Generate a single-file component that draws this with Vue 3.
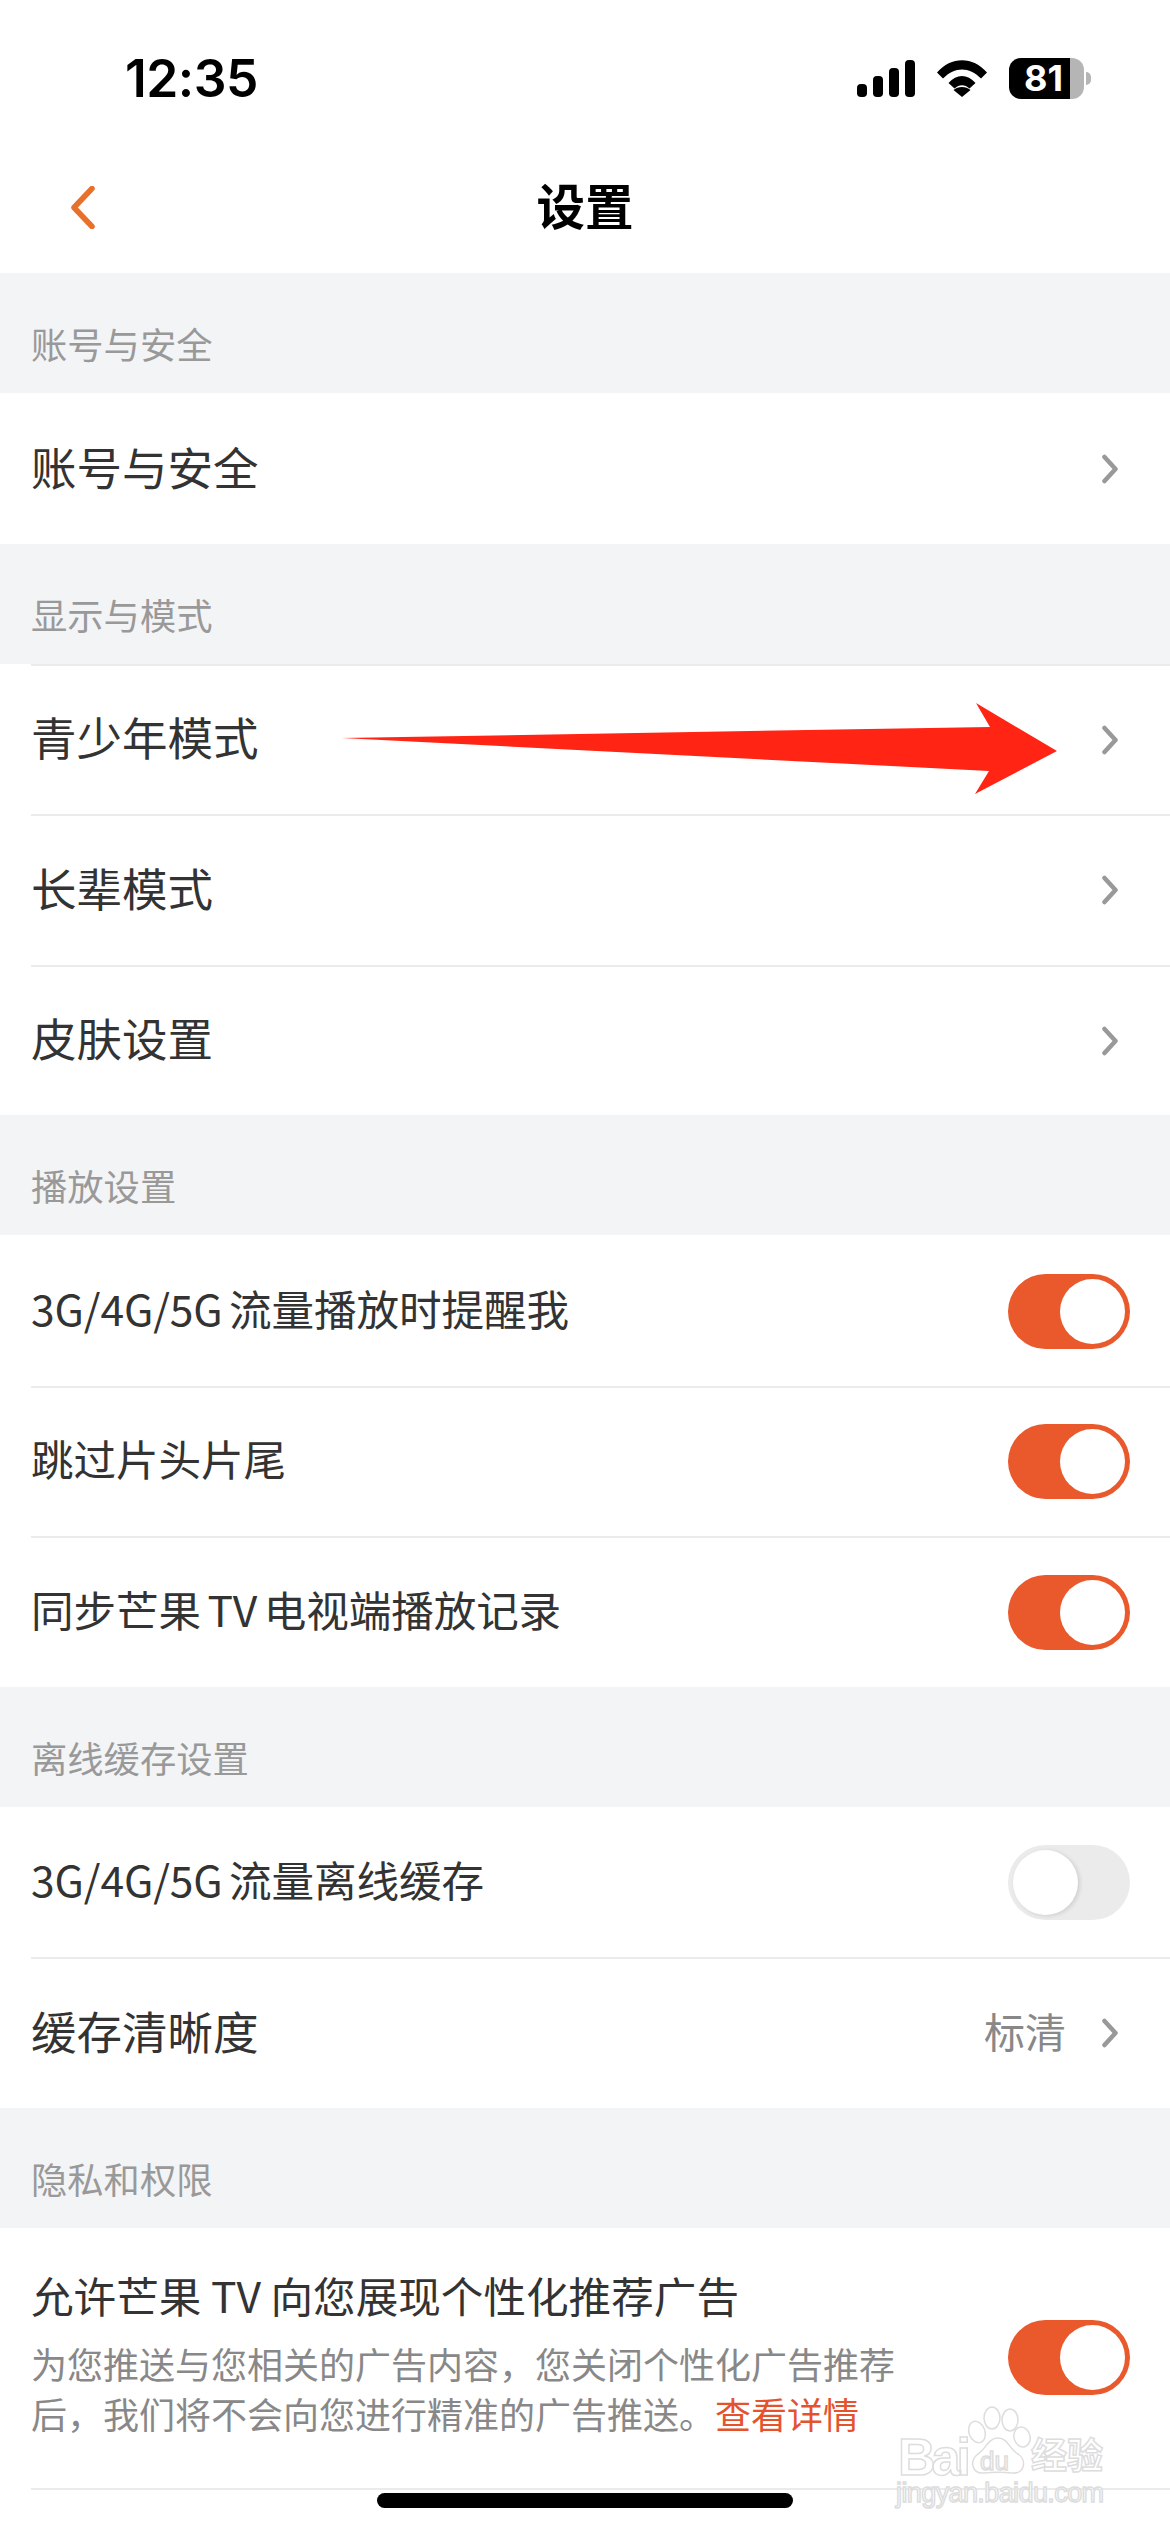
<template>
  <div class="settings-page">
    <div class="status-bar">
      <span class="clock">12:35</span>
      <div class="status-icons">
        <svg class="signal" width="58" height="37" viewBox="0 0 58 37">
          <rect x="0" y="24" width="10" height="13" rx="4" />
          <rect x="16" y="16" width="10" height="21" rx="4" />
          <rect x="32" y="8" width="10" height="29" rx="4" />
          <rect x="48" y="0" width="10" height="37" rx="4" />
        </svg>
        <svg class="wifi" width="50" height="37" viewBox="0 0 50 37">
          <path d="M0 12.5C14-4 36-4 50 12.5L44 18.5C32 6.5 18 6.5 6 18.5Z" />
          <path d="M11.5 23C19.5 13.5 30.5 13.5 38.5 23L32.5 28.5C28 24 22 24 17.5 28.5Z" />
          <path d="M25 37L16.5 30C21 26 29 26 33.5 30Z" />
        </svg>
        <div class="battery"><span>81</span></div>
      </div>
    </div>

    <header class="nav-bar">
      <svg class="back-icon" width="24" height="43" viewBox="0 0 24 43">
        <polyline points="21,2.5 3,21.5 21,40.5" />
      </svg>
      <h1 class="nav-title">设置</h1>
      <span></span>
    </header>

    <section v-for="group in groups" :key="group.title">
      <div class="group-title">{{ group.title }}</div>
      <div v-for="(row, i) in group.rows" :key="row.label" class="row" :class="{ lined: i > 0 || group.topLine }">
        <span class="row-label" :class="{ small: row.toggle !== undefined }">{{ row.label }}</span>
        <div class="row-right">
          <span v-if="row.value" class="row-value">{{ row.value }}</span>
          <div v-if="row.toggle !== undefined" class="toggle" :class="{ on: row.toggle }">
            <i class="knob"></i>
          </div>
          <svg v-else class="chevron" width="16" height="30" viewBox="0 0 16 30">
            <polyline points="2.5,3 13.5,15 2.5,27" />
          </svg>
        </div>
      </div>
    </section>

    <section>
      <div class="group-title">隐私和权限</div>
      <div class="ad-row">
        <div class="ad-text">
          <p class="ad-title">允许芒果 TV 向您展现个性化推荐广告</p>
          <p class="ad-desc">为您推送与您相关的广告内容，您关闭个性化广告推荐后，我们将不会向您进行精准的广告推送。<span class="ad-link">查看详情</span></p>
        </div>
        <div class="toggle on"><i class="knob"></i></div>
      </div>
    </section>

    <!-- red arrow drawn over the screenshot -->
    <svg class="red-arrow" width="1170" height="120" viewBox="0 0 1170 120">
      <polygon points="342,48 990,37 976,13 1057,61 975,104 989,81" />
    </svg>

    <div class="home-indicator"></div>

    <div class="watermark">
      <svg class="paw" width="225" height="110" viewBox="0 0 225 110">
        <ellipse cx="87" cy="32" rx="8" ry="11" transform="rotate(-20 87 32)" />
        <ellipse cx="102" cy="18" rx="8" ry="11" />
        <ellipse cx="120" cy="20" rx="8" ry="11" />
        <ellipse cx="132" cy="37" rx="8" ry="10" transform="rotate(-15 132 37)" />
        <path d="M108 38C118 38 120 50 128 54C137 60 135 74 122 73C112 72 104 72 94 73C82 74 79 61 88 54C96 49 98 38 108 38Z" />
      </svg>
      <span class="wm-bai">Bai</span>
      <span class="wm-du">du</span>
      <span class="wm-cn">经验</span>
      <span class="wm-url">jingyan.baidu.com</span>
    </div>
  </div>
</template>

<script setup>
const groups = [
  {
    title: '账号与安全',
    rows: [{ label: '账号与安全' }],
  },
  {
    title: '显示与模式',
    topLine: true,
    rows: [{ label: '青少年模式' }, { label: '长辈模式' }, { label: '皮肤设置' }],
  },
  {
    title: '播放设置',
    rows: [
      { label: '3G/4G/5G 流量播放时提醒我', toggle: true },
      { label: '跳过片头片尾', toggle: true },
      { label: '同步芒果 TV 电视端播放记录', toggle: true },
    ],
  },
  {
    title: '离线缓存设置',
    rows: [
      { label: '3G/4G/5G 流量离线缓存', toggle: false },
      { label: '缓存清晰度', value: '标清' },
    ],
  },
];
</script>

<style scoped>
.settings-page {
  position: relative;
  width: 1170px;
  height: 2532px;
  overflow: hidden;
  background: #fff;
  font-family: "Noto Sans CJK SC", "Noto Sans", sans-serif;
  color: #333;
}

.status-bar {
  height: 156px;
  display: flex;
  align-items: center;
  justify-content: space-between;
  padding: 0 79px 0 125px;
  box-sizing: border-box;
}

.clock {
  font-family: Inter, sans-serif;
  font-size: 51.5px;
  font-weight: 600;
  color: #000;
  letter-spacing: -0.5px;
}

.status-icons {
  display: flex;
  align-items: center;
  gap: 22px;
}

.signal,
.wifi {
  fill: #000;
}

.battery {
  position: relative;
  width: 75px;
  height: 41px;
  margin-right: 7px;
  border-radius: 12px;
  background: linear-gradient(90deg, #000 61px, #b5b5b5 61px);
  display: flex;
  align-items: center;
  padding-left: 15px;
  box-sizing: border-box;
  font-family: Inter, sans-serif;
  font-size: 36px;
  font-weight: 700;
  color: #fff;
}

.battery::after {
  content: "";
  position: absolute;
  right: -7px;
  top: 14px;
  width: 5px;
  height: 13px;
  border-radius: 0 6px 6px 0;
  background: #b5b5b5;
}

.nav-bar {
  height: 117px;
  padding-bottom: 14px;
  box-sizing: border-box;
  display: grid;
  grid-template-columns: 1fr auto 1fr;
  align-items: center;
}

.back-icon {
  margin-left: 71px;
}

.back-icon polyline {
  fill: none;
  stroke: #e8702a;
  stroke-width: 5.5;
  stroke-linecap: round;
  stroke-linejoin: round;
}

.nav-title {
  margin: 0;
  padding-bottom: 8px;
  font-size: 48.5px;
  line-height: 60px;
  font-weight: 700;
  color: #000;
}

.group-title {
  height: 120px;
  padding: 20px 0 0 31px;
  box-sizing: border-box;
  display: flex;
  align-items: center;
  background: #f3f4f6;
  font-size: 36.3px;
  color: #999;
}

.row {
  height: 150.5px;
  margin-left: 31px;
  padding-right: 40px;
  box-sizing: border-box;
  display: flex;
  align-items: center;
  justify-content: space-between;
  border-top: 2px solid transparent;
}

.row.lined {
  border-top-color: #ebebeb;
}

.row-label {
  padding-bottom: 7px;
  font-size: 45.5px;
  line-height: 60px;
}

.row-label.small {
  font-size: 42.6px;
  word-spacing: -3px;
  letter-spacing: -0.1px;
}

.row-right {
  display: flex;
  align-items: center;
}

.row-value {
  margin-right: 36px;
  padding-bottom: 6px;
  font-size: 41px;
  color: #888;
}

.chevron {
  margin-right: 12px;
}

.chevron polyline {
  fill: none;
  stroke: #999;
  stroke-width: 4.5;
  stroke-linecap: round;
  stroke-linejoin: round;
}

.toggle {
  width: 122px;
  height: 75px;
  padding: 5px;
  box-sizing: border-box;
  border-radius: 38px;
  background: #ebebeb;
  display: flex;
  flex-shrink: 0;
}

.toggle.on {
  background: #ea592b;
  justify-content: flex-end;
}

.knob {
  display: block;
  width: 65px;
  height: 65px;
  border-radius: 50%;
  background: #fff;
}

.toggle:not(.on) .knob {
  box-shadow: 2px 1px 4px rgba(0, 0, 0, 0.12);
}

.ad-row {
  height: 262px;
  margin-left: 31px;
  padding-right: 40px;
  box-sizing: border-box;
  display: flex;
  align-items: center;
  justify-content: space-between;
  border-bottom: 2px solid #ebebeb;
}

.ad-text {
  width: 866px;
  padding-bottom: 12px;
}

.ad-title {
  margin: 0 0 13px;
  font-size: 42.6px;
  line-height: 60px;
  white-space: nowrap;
}

.ad-desc {
  margin: 0;
  font-size: 36px;
  line-height: 50px;
  color: #888;
}

.ad-link {
  color: #e5532d;
}

.red-arrow {
  position: absolute;
  left: 0;
  top: 690px;
}

.red-arrow polygon {
  fill: #ff2414;
}

.home-indicator {
  position: absolute;
  left: 377px;
  top: 2493px;
  width: 416px;
  height: 15px;
  border-radius: 8px;
  background: #000;
}

.watermark {
  position: absolute;
  left: 890px;
  top: 2400px;
  width: 225px;
  height: 110px;
  font-family: "Liberation Sans", sans-serif;
  color: #fff;
  -webkit-text-stroke: 1.5px #ddd;
}

.paw {
  position: absolute;
  left: 0;
  top: 0;
  fill: #fff;
  stroke: #ddd;
  stroke-width: 1.5;
}

.watermark span {
  position: absolute;
  white-space: nowrap;
}

.wm-bai {
  left: 8px;
  top: 35px;
  font-size: 52px;
  line-height: 44px;
  font-weight: 700;
  letter-spacing: -4px;
}

.wm-du {
  left: 90px;
  top: 46px;
  font-size: 26px;
  line-height: 30px;
}

.wm-cn {
  left: 141px;
  top: 33px;
  font-family: "Noto Sans CJK SC", sans-serif;
  font-size: 36px;
  line-height: 40px;
  font-weight: 700;
}

.wm-url {
  left: 6px;
  top: 78px;
  font-size: 27px;
  line-height: 30px;
  letter-spacing: -0.6px;
}
</style>
